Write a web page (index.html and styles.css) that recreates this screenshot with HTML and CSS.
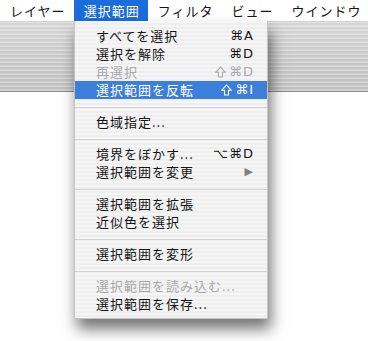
FILE: index.html
```html
<!DOCTYPE html>
<html lang="ja">

<head>
    <meta charset="UTF-8">
    <meta name="viewport" content="width=device-width, initial-scale=1.0">
    <title>選択範囲メニュー</title>
    <link rel="stylesheet" href="styles.css">
</head>

<body>
    <div class="menubar">
        <span class="menubar-item">レイヤー</span>
        <span class="menubar-item open">選択範囲</span>
        <span class="menubar-item">フィルタ</span>
        <span class="menubar-item">ビュー</span>
        <span class="menubar-item">ウインドウ</span>
    </div>

    <div class="toolbar"></div>

    <div class="menu">
        <div class="item"><span>すべてを選択</span><span class="key">⌘A</span></div>
        <div class="item"><span>選択を解除</span><span class="key">⌘D</span></div>
        <div class="item disabled"><span>再選択</span><span class="key"><svg class="shift" viewBox="0 0 11 12"><path d="M5.5 1 L10.3 6.3 H7.5 V11 H3.5 V6.3 H0.7 Z"/></svg>⌘D</span></div>
        <div class="item active"><span>選択範囲を反転</span><span class="key"><svg class="shift" viewBox="0 0 11 12"><path d="M5.5 1 L10.3 6.3 H7.5 V11 H3.5 V6.3 H0.7 Z"/></svg>⌘I</span></div>
        <div class="sep"></div>
        <div class="item"><span>色域指定...</span></div>
        <div class="sep"></div>
        <div class="item"><span>境界をぼかす...</span><span class="key">⌥⌘D</span></div>
        <div class="item"><span>選択範囲を変更</span><span class="arrow">▶</span></div>
        <div class="sep"></div>
        <div class="item"><span>選択範囲を拡張</span></div>
        <div class="item"><span>近似色を選択</span></div>
        <div class="sep"></div>
        <div class="item"><span>選択範囲を変形</span></div>
        <div class="sep"></div>
        <div class="item disabled"><span>選択範囲を読み込む...</span></div>
        <div class="item"><span>選択範囲を保存...</span></div>
    </div>
</body>

</html>
```

FILE: styles.css
```css
body {
    margin: 0;
    background-color: #ffffff;
    font-family: "Noto Sans CJK JP", "DejaVu Sans", sans-serif;
    font-size: 13px;
    letter-spacing: 1px;
    color: #151515;
    position: relative;
    height: 341px;
    overflow: hidden;
}

.menubar {
    display: flex;
    height: 21px;
    background-color: #ffffff;
    border-bottom: 1px solid #d0d0d0;
    white-space: nowrap;
}

.menubar-item {
    flex: none;
    padding: 0 8px 0 10px;
    height: 21px;
    line-height: 21px;
}

.menubar-item.open {
    background-color: #1c6ddc;
    color: #ffffff;
}

.toolbar {
    height: 69px;
    border-bottom: 1px solid #8a8a8a;
    background:
        repeating-linear-gradient(180deg, rgba(255, 255, 255, 0.25) 0 1px, rgba(0, 0, 0, 0.03) 1px 3px, rgba(255, 255, 255, 0.1) 3px 4px),
        linear-gradient(180deg, #dcdcdc 0%, #cdcdcd 60%, #c6c6c6 100%);
}

.menu {
    position: absolute;
    left: 74px;
    top: 21px;
    width: 194px;
    padding: 6px 0 5px;
    background: repeating-linear-gradient(180deg, #f6f6f6 0 2px, #eeeeee 2px 4px);
    border: 1px solid #c4c4c4;
    border-top: none;
    box-sizing: border-box;
    box-shadow: 3px 10px 14px rgba(0, 0, 0, 0.55);
}

.item {
    display: flex;
    justify-content: space-between;
    align-items: center;
    height: 18px;
    padding: 0 13px 0 21px;
    line-height: 18px;
    white-space: nowrap;
}

.item span {
    height: 18px;
    line-height: 18px;
}

.item.disabled {
    color: #a8a8a8;
}

.item.active {
    background-color: #3b7fdb;
    color: #ffffff;
}

.key {
    display: flex;
    align-items: center;
    font-family: "DejaVu Sans", sans-serif;
    font-size: 13px;
    letter-spacing: 1px;
}

.shift {
    width: 11px;
    height: 12px;
    margin-right: 3px;
    fill: none;
    stroke: currentColor;
    stroke-width: 1.1;
}

.item .arrow {
    font-family: "DejaVu Sans", sans-serif;
    font-size: 11px;
    color: #808080;
}

.sep {
    height: 14px;
    display: flex;
    align-items: center;
}

.sep::before {
    content: "";
    flex: 1;
    height: 1px;
    margin-top: 2px;
    background-color: #d4d4d4;
}
```
